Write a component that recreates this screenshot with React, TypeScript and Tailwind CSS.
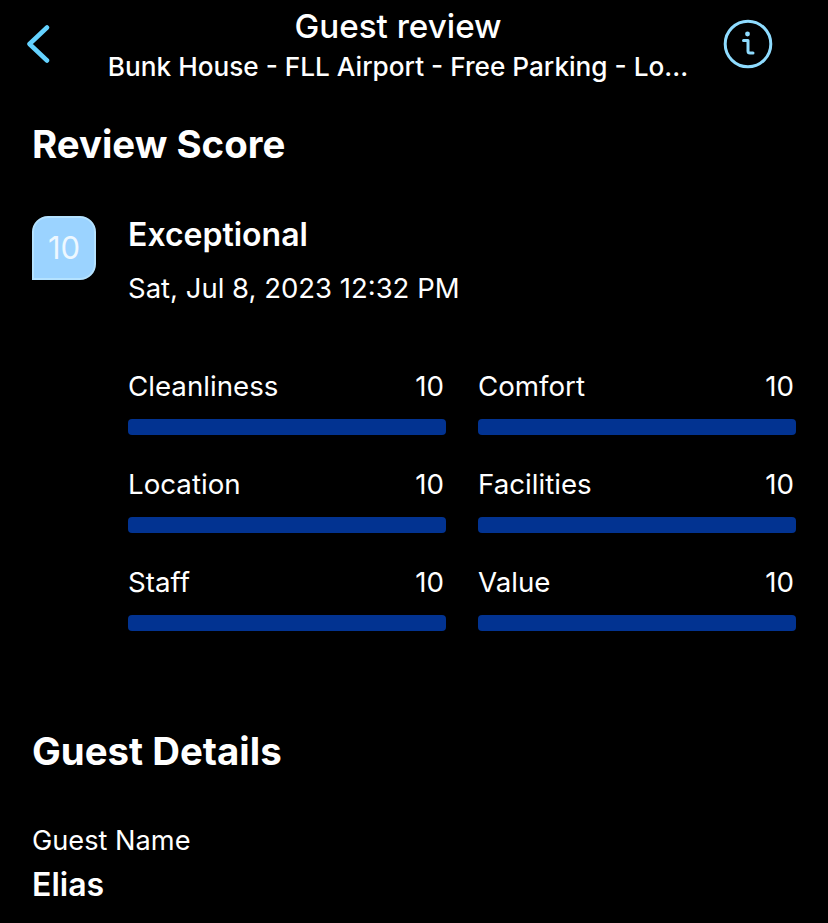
import React from 'react';

const scores = [
    { label: 'Cleanliness', value: 10 },
    { label: 'Comfort', value: 10 },
    { label: 'Location', value: 10 },
    { label: 'Facilities', value: 10 },
    { label: 'Staff', value: 10 },
    { label: 'Value', value: 10 },
];

function ScoreRow({ label, value }: { label: string; value: number }): JSX.Element {
    return <div className="h-[98px]">
        <div className="flex justify-between h-[32px] items-center pr-[2px] text-[27.7px] leading-[32px] text-white">
            <span>{label}</span>
            <span>{value}</span>
        </div>
        <div className="mt-[17px] h-[16px] rounded-[4px] bg-[#023391]" />
    </div>;
}

export default function App(): JSX.Element {
    return <div className="w-[828px] h-[923px] overflow-hidden bg-black text-white font-['Inter',sans-serif]">
        <div className="relative h-[90px] pt-[8px] flex flex-col items-center">
            <button className="absolute left-[26px] top-[25px] text-[#64d2ff]">
                <svg width="26" height="38" viewBox="0 0 26 38" fill="none" stroke="currentColor" strokeWidth="4.5" strokeLinecap="round" strokeLinejoin="round">
                    <path d="M21 2.5 L3.5 19 L21 35.5" />
                </svg>
            </button>
            <div className="text-[33.2px] leading-[36px] font-medium ml-[-32px]">Guest review</div>
            <div className="mt-[5px] text-[26.2px] leading-[36px] font-medium ml-[-32px] whitespace-nowrap">Bunk House - FLL Airport - Free Parking - Lo...</div>
            <button className="absolute left-[723px] top-[19px] text-[#8fdcff]">
                <svg width="50" height="50" viewBox="0 0 50 50" fill="none" stroke="currentColor" strokeLinecap="round" strokeLinejoin="round">
                    <circle cx="25" cy="25" r="22.8" strokeWidth="3" />
                    <circle cx="24.5" cy="15" r="2.4" fill="currentColor" stroke="none" />
                    <path d="M20.5 21.5 H25 V32 Q25 34 27 34 H30" strokeWidth="3" />
                </svg>
            </button>
        </div>

        <div className="pl-[32px] pr-[32px]">
            <h2 className="mt-[32px] text-[38.4px] leading-[44px] font-bold">Review Score</h2>

            <div className="mt-[50px] flex">
                <div className="w-[64px] h-[64px] rounded-[16px] rounded-bl-none bg-[#9bd3ff] border-2 border-[#b4e2ff] flex items-center justify-center text-[31px] text-[#eef8ff] shrink-0">10</div>
                <div className="ml-[32px] flex-1">
                    <div className="text-[32px] leading-[38px] font-semibold">Exceptional</div>
                    <div className="mt-[16px] text-[27.5px] leading-[36px]">Sat, Jul 8, 2023 12:32 PM</div>
                    <div className="mt-[64px] grid grid-cols-2 gap-x-[32px]">
                        {scores.map((s) => <ScoreRow key={s.label} label={s.label} value={s.value} />)}
                    </div>
                </div>
            </div>

            <h2 className="mt-[65px] text-[38.4px] leading-[44px] font-bold">Guest Details</h2>
            <div className="mt-[52px] text-[27.2px] leading-[32px]">Guest Name</div>
            <div className="mt-[10px] text-[32px] leading-[36px] font-semibold">Elias</div>
        </div>
    </div>;
}
